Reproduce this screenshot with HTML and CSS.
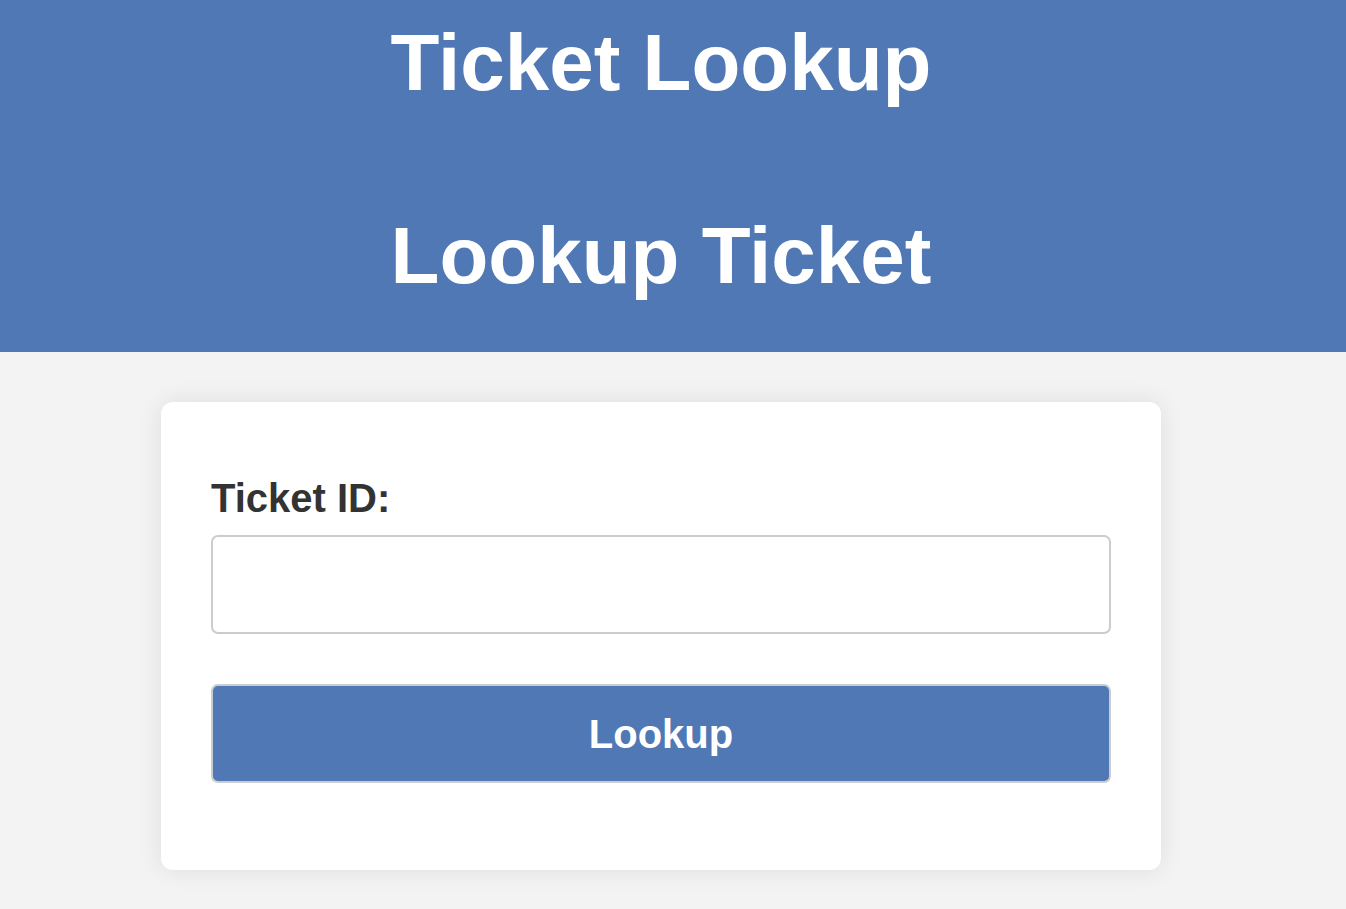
FILE: index.html
```html
<!DOCTYPE html>
<html lang="en">
<head>
<meta charset="utf-8">
<title>Ticket Lookup</title>
<link rel="stylesheet" href="styles.css">
</head>
<body>
<header class="site-header">
  <div class="header-inner">
    <h1 class="title">Ticket Lookup</h1>
    <h1 class="title title-second">Lookup Ticket</h1>
  </div>
</header>
<main class="main">
  <form class="card" onsubmit="return false;">
    <label class="field-label" for="ticket-id">Ticket ID:</label>
    <input class="field-input" id="ticket-id" type="text">
    <button class="btn" type="submit">Lookup</button>
  </form>
</main>
</body>
</html>
```

FILE: styles.css
```css
* {
  box-sizing: border-box;
}

html, body {
  margin: 0;
  padding: 0;
}

body {
  background: #f3f3f3;
  font-family: "Liberation Sans", Arial, sans-serif;
  min-height: 909px;
}

.site-header {
  background: #4f78b4;
}

.header-inner {
  padding: 17px 24px 50px 0;
  display: flex;
  flex-direction: column;
  align-items: center;
}

.title {
  margin: 0;
  color: #ffffff;
  font-size: 80px;
  line-height: 92px;
  font-weight: bold;
  text-align: center;
}

.title-second {
  margin-top: 101px;
}

.main {
  padding: 50px 24px 0 0;
  display: flex;
  justify-content: center;
}

.card {
  width: 1000px;
  background: #ffffff;
  border-radius: 12px;
  box-shadow: 0 0 25px rgba(0, 0, 0, 0.09);
  padding: 73px 50px 87px;
  display: flex;
  flex-direction: column;
}

.field-label {
  display: block;
  color: #333333;
  font-size: 40px;
  line-height: 46px;
  font-weight: bold;
  margin-bottom: 14px;
}

.field-input {
  display: block;
  width: 100%;
  height: 99px;
  border: 2px solid #cccccc;
  border-radius: 7px;
  background: #ffffff;
  font-family: inherit;
  font-size: 40px;
  padding: 0 20px;
  margin: 0;
  outline: none;
}

.btn {
  display: block;
  width: 100%;
  height: 99px;
  margin: 50px 0 0;
  border: 2px solid #c9ccd1;
  border-radius: 7px;
  background: #4f78b4;
  color: #ffffff;
  font-family: inherit;
  font-size: 40px;
  line-height: 46px;
  font-weight: bold;
  cursor: pointer;
  padding: 0;
}
```
